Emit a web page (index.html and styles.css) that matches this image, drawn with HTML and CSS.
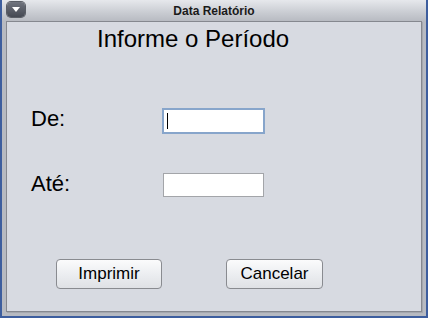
FILE: index.html
```html
<!DOCTYPE html>
<html lang="pt">
<head>
<meta charset="utf-8">
<title>Data Relatório</title>
<link rel="stylesheet" href="styles.css">
</head>
<body>
<div class="window">
  <div class="titlebar">
    <div class="menu-btn">
      <svg width="8" height="6" viewBox="0 0 8 6"><path d="M0 0 L8 0 L4 5 Z" fill="#ffffff"/></svg>
    </div>
    <div class="title">Data Relatório</div>
  </div>
  <div class="frame">
    <div class="panel">
      <div class="heading">Informe o Período</div>
      <div class="row row-de">
        <div class="label">De:</div>
        <div class="input focused"><span class="caret"></span></div>
      </div>
      <div class="row row-ate">
        <div class="label">Até:</div>
        <div class="input"></div>
      </div>
      <div class="buttons">
        <div class="btn btn-print">Imprimir</div>
        <div class="btn btn-cancel">Cancelar</div>
      </div>
    </div>
  </div>
</div>
</body>
</html>
```

FILE: styles.css
```css
html, body {
  margin: 0;
  padding: 0;
}
body {
  width: 428px;
  height: 318px;
  overflow: hidden;
  font-family: "Liberation Sans", Arial, sans-serif;
  color: #000;
}
.window {
  box-sizing: border-box;
  width: 428px;
  height: 318px;
  border-left: 2px solid #3d5e9e;
  border-right: 2px solid #3d5e9e;
  border-bottom: 2px solid #3d5e9e;
  background: #b7bac1;
  display: flex;
  flex-direction: column;
}
.titlebar {
  position: relative;
  height: 21px;
  flex: none;
  background: linear-gradient(#e6e8ec, #c9ccd2 60%, #b8bbc2);
  display: flex;
  align-items: center;
  justify-content: center;
}
.menu-btn {
  position: absolute;
  left: 5px;
  top: 2px;
  width: 18px;
  height: 15px;
  border-radius: 4px;
  background: linear-gradient(#70747e, #454953);
  box-shadow: 0 0 0 1px #5a5e66;
  display: flex;
  align-items: center;
  justify-content: center;
}
.menu-btn svg { display: block; margin-top: 1px; }
.title {
  font-size: 12px;
  font-weight: bold;
  color: #1a1a1a;
  margin-top: 0px;
}
.frame {
  flex: 1;
  padding: 0 4px 4px 4px;
  display: flex;
}
.panel {
  flex: 1;
  background: #d7dae1;
  border: 1px solid #85888f;
  box-shadow: 1px 1px 0 #a4a7ae;
  display: flex;
  flex-direction: column;
}
.heading {
  font-size: 24px;
  line-height: 28px;
  margin: 3px 0 0 90px;
}
.row {
  display: flex;
  align-items: flex-start;
  padding-left: 24px;
}
.row-de { margin-top: 55px; }
.row-ate { margin-top: 39px; }
.label {
  font-size: 22px;
  line-height: 22px;
  width: 131px;
}
.input {
  box-sizing: border-box;
  width: 101px;
  height: 24px;
  margin-left: 1px;
  background: #fff;
  border: 1px solid #a3a5a9;
}
.input.focused {
  width: 103px;
  height: 26px;
  margin-left: 0;
  border: 2px solid #87a5cb;
  padding: 3px 0 0 3px;
}
.caret {
  display: block;
  width: 1px;
  height: 16px;
  background: #000;
}
.buttons {
  display: flex;
  gap: 64px;
  margin: 62px 0 0 49px;
}
.btn {
  box-sizing: border-box;
  height: 30px;
  border: 1px solid #898b90;
  border-radius: 4px;
  background: linear-gradient(#fbfbfc, #eceef1 50%, #dfe1e5);
  font-size: 17px;
  display: flex;
  align-items: center;
  justify-content: center;
}
.btn-print { width: 106px; }
.btn-cancel { width: 97px; }
```
